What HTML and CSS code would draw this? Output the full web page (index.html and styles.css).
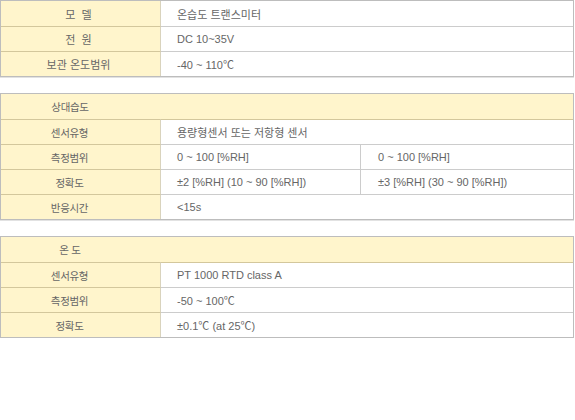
FILE: index.html
```html
<!DOCTYPE html>
<html lang="ko">
<head>
<meta charset="utf-8">
<link rel="stylesheet" href="styles.css">
</head>
<body>
<div class="page">
  <div class="spec spec-main">
    <div class="row"><div class="label">모  델</div><div class="value">온습도 트랜스미터</div></div>
    <div class="row"><div class="label">전  원</div><div class="value">DC 10~35V</div></div>
    <div class="row"><div class="label">보관 온도범위</div><div class="value">-40 ~ 110℃</div></div>
  </div>

  <div class="spec spec-sub">
    <div class="row head"><div class="label">상대습도</div><div class="value"></div></div>
    <div class="row"><div class="label">센서유형</div><div class="value">용량형센서 또는 저항형 센서</div></div>
    <div class="row"><div class="label">측정범위</div><div class="value half">0 ~ 100 [%RH]</div><div class="value">0 ~ 100 [%RH]</div></div>
    <div class="row"><div class="label">정확도</div><div class="value half">±2 [%RH] (10 ~ 90 [%RH])</div><div class="value">±3 [%RH] (30 ~ 90 [%RH])</div></div>
    <div class="row"><div class="label">반응시간</div><div class="value">&lt;15s</div></div>
  </div>

  <div class="spec spec-sub">
    <div class="row head"><div class="label">온 도</div><div class="value"></div></div>
    <div class="row"><div class="label">센서유형</div><div class="value">PT 1000 RTD class A</div></div>
    <div class="row"><div class="label">측정범위</div><div class="value">-50 ~ 100℃</div></div>
    <div class="row"><div class="label">정확도</div><div class="value">±0.1℃ (at 25℃)</div></div>
  </div>
</div>
</body>
</html>
```

FILE: styles.css
```css
html, body {
  margin: 0;
  padding: 0;
  background: #ffffff;
}
body {
  font-family: "Liberation Sans", "Noto Sans CJK KR", sans-serif;
  font-size: 11px;
  color: #666666;
}
.page {
  display: flex;
  flex-direction: column;
  gap: 16px;
  width: 574px;
}
.spec {
  border: 1px solid #bdbdbd;
  box-sizing: border-box;
  width: 574px;
  box-shadow: 0 1px 0 #e2e2e2;
}
.row {
  display: flex;
  height: 25px;
}
.row + .row .label {
  border-top: 1px solid #d3c79c;
}
.row + .row .value {
  border-top: 1px solid #cccccc;
}
.label {
  width: 160px;
  flex: none;
  box-sizing: border-box;
  background: #fff5cc;
  border-right: 1px solid #d9d3bd;
  display: flex;
  align-items: center;
  justify-content: center;
  padding-right: 4px;
  white-space: pre;
}
.spec-sub .label {
  padding-right: 22px;
  font-size: 10.5px;
  letter-spacing: -0.3px;
}
.value {
  flex: 1;
  display: flex;
  align-items: center;
  padding-left: 16px;
  white-space: pre;
}
.value.half {
  flex: none;
  width: 200px;
  box-sizing: border-box;
  border-right: 1px solid #cccccc;
}
.value.half + .value {
  padding-left: 17px;
}
.row.head {
  background: #fff5cc;
}
.row.head .label {
  border-right: none;
}
.row.head + .row .value {
  border-top-color: #d3c79c;
}
```
